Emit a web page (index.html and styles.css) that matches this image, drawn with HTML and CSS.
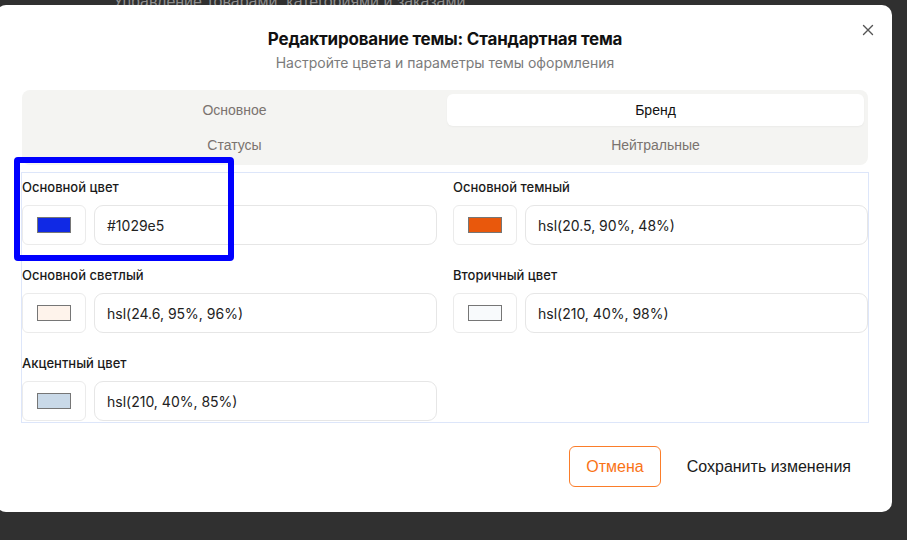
FILE: index.html
```html
<!DOCTYPE html>
<html lang="ru">
<head>
<meta charset="utf-8">
<title>Редактирование темы</title>
<link rel="stylesheet" href="styles.css">
</head>
<body>
<div class="page">
  <p class="page-sub">Управление товарами, категориями и заказами</p>
</div>

<div class="modal">
  <button class="close" aria-label="Закрыть">
    <svg width="12" height="12" viewBox="0 0 12 12"><path d="M1.5 1.5L10.5 10.5M10.5 1.5L1.5 10.5" stroke="#555" stroke-width="1.4" stroke-linecap="round"/></svg>
  </button>
  <header class="head">
    <h2 class="title">Редактирование темы: Стандартная тема</h2>
    <p class="subtitle">Настройте цвета и параметры темы оформления</p>
  </header>

  <div class="tabs">
    <div class="tab">Основное</div>
    <div class="tab active">Бренд</div>
    <div class="tab">Статусы</div>
    <div class="tab">Нейтральные</div>
  </div>

  <div class="fields">
    <div class="field">
      <label class="label">Основной цвет</label>
      <div class="row">
        <div class="swatch"><span class="chip" style="background:#1029e5"></span></div>
        <div class="input">#1029e5</div>
      </div>
    </div>
    <div class="field">
      <label class="label">Основной темный</label>
      <div class="row">
        <div class="swatch"><span class="chip" style="background:hsl(20.5,90%,48%)"></span></div>
        <div class="input">hsl(20.5, 90%, 48%)</div>
      </div>
    </div>
    <div class="field">
      <label class="label">Основной светлый</label>
      <div class="row">
        <div class="swatch"><span class="chip" style="background:hsl(24.6,95%,96%)"></span></div>
        <div class="input">hsl(24.6, 95%, 96%)</div>
      </div>
    </div>
    <div class="field">
      <label class="label">Вторичный цвет</label>
      <div class="row">
        <div class="swatch"><span class="chip" style="background:hsl(210,40%,98%)"></span></div>
        <div class="input">hsl(210, 40%, 98%)</div>
      </div>
    </div>
    <div class="field">
      <label class="label">Акцентный цвет</label>
      <div class="row">
        <div class="swatch"><span class="chip" style="background:hsl(210,40%,85%)"></span></div>
        <div class="input">hsl(210, 40%, 85%)</div>
      </div>
    </div>
  </div>

  <footer class="foot">
    <button class="btn cancel">Отмена</button>
    <button class="btn save">Сохранить изменения</button>
  </footer>
</div>

<div class="highlight"></div>
</body>
</html>
```
FILE: styles.css
```css
* { box-sizing: border-box; }
html, body { margin: 0; height: 100%; }
body {
  background: #303030;
  overflow: hidden;
  font-family: Inter, "Liberation Sans", Arial, sans-serif;
}
.page { padding-left: 113px; }
.page-sub {
  margin: -8px 0 0;
  font-family: "Liberation Sans", Arial, sans-serif;
  font-size: 16px;
  line-height: 20px;
  color: #8d8d8d;
}
.modal {
  position: absolute;
  left: -4px;
  top: 5px;
  width: 896px;
  height: 507px;
  background: #fff;
  border-radius: 10px;
  padding: 24px 23px 25px 25px;
  display: flex;
  flex-direction: column;
}
.close {
  position: absolute;
  right: 18px;
  top: 19px;
  width: 12px;
  height: 12px;
  padding: 0;
  border: 0;
  background: none;
  display: flex;
}
.head { text-align: center; }
.title {
  margin: 0;
  font-family: Inter, "Liberation Sans", sans-serif;
  font-size: 17px;
  line-height: 20px;
  font-weight: 700;
  color: #111;
  letter-spacing: -0.2px;
}
.subtitle {
  margin: 5px 0 0;
  font-size: 14px;
  line-height: 18px;
  color: #7b7b7b;
}
.tabs {
  margin: 18px 1px 0;
  background: #f4f4f2;
  border-radius: 8px;
  padding: 4px;
  display: grid;
  grid-template-columns: 1fr 1fr;
  grid-auto-rows: 32px;
  column-gap: 4px;
  row-gap: 3px;
}
.tab {
  display: flex;
  align-items: center;
  justify-content: center;
  font-family: "Liberation Sans", Arial, sans-serif;
  font-size: 14px;
  color: #7a736f;
  border-radius: 6px;
}
.tab.active {
  background: #fff;
  color: #111;
  box-shadow: 0 1px 2px rgba(0,0,0,0.04);
}
.fields {
  margin-top: 7px;
  border: 1px solid #dde6fa;
  padding: 4px 0 1px;
  display: grid;
  grid-template-columns: 1fr 1fr;
  column-gap: 16px;
  row-gap: 20px;
}
.label {
  display: block;
  font-size: 13px;
  line-height: 20px;
  font-weight: 500;
  color: #1a1a1a;
  margin-bottom: 8px;
}
.row { display: flex; gap: 8px; height: 40px; }
.swatch {
  width: 64px;
  flex: none;
  border: 1px solid #ebebeb;
  border-radius: 6px;
  display: flex;
  align-items: center;
  justify-content: center;
}
.chip {
  width: 34px;
  height: 16px;
  border: 1px solid #767676;
}
.input {
  flex: 1;
  border: 1px solid #e6e6e6;
  border-radius: 9px;
  padding: 0 12px;
  display: flex;
  align-items: center;
  font-size: 14px;
  color: #222;
}
.foot {
  margin-top: 23px;
  display: flex;
  justify-content: flex-end;
  gap: 8px;
}
.btn {
  height: 41px;
  font-family: "Liberation Sans", Arial, sans-serif;
  font-size: 16px;
  background: #fff;
  border-radius: 6px;
  cursor: pointer;
}
.cancel {
  border: 1px solid #fb7d2a;
  color: #f97316;
  padding: 0 16px;
}
.save {
  border: 1px solid transparent;
  color: #1a1a1a;
  padding: 0 17px;
}
.highlight {
  position: absolute;
  left: 14px;
  top: 157px;
  width: 220px;
  height: 104px;
  border: 6px solid #0000ff;
  border-radius: 4px;
}
```
